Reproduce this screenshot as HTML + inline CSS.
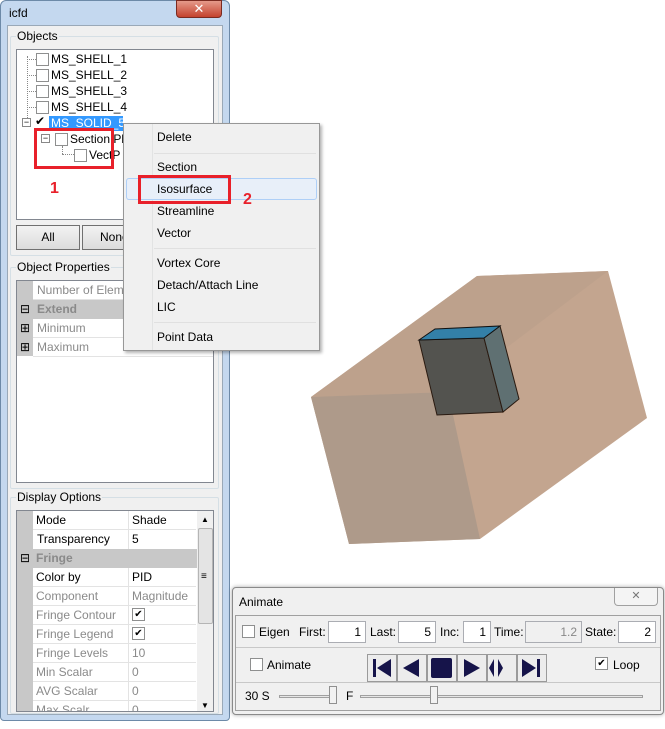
<!DOCTYPE html>
<html><head><meta charset="utf-8"><style>
*{margin:0;padding:0;box-sizing:border-box}
body{width:665px;height:729px;background:#fff;position:relative;overflow:hidden;font-family:"Liberation Sans","DejaVu Sans",sans-serif;font-size:12px;color:#000}
.a{position:absolute}
.t{position:absolute;white-space:nowrap;line-height:14px}
.cb{position:absolute;width:13px;height:13px;border:1px solid #8e8f8f;background:#fff}
.grp{position:absolute;border:1px solid #d5dfe5;border-radius:2px}
.lbl{position:absolute;background:#f0f0f0;padding:0 1px;line-height:14px}
.row{position:absolute;left:33px;height:19px;border-bottom:1px solid #e3e3e3;background:#fff}
.row span{position:absolute;top:2px;line-height:14px;white-space:nowrap}
.g{color:#8a8a8a}
.mi{position:absolute;left:157px;line-height:14px}
.sep{position:absolute;left:154px;width:162px;height:1px;background:#e0e0e0}
.btn{position:absolute;border:1px solid #707070;background:linear-gradient(#f2f2f2,#dcdcdc);text-align:center;line-height:22px}
.pb{position:absolute;top:654px;width:30px;height:28px;border:1px solid #9a9a9a;background:#ececec}
.in{position:absolute;top:621px;height:22px;border:1px solid #abadb3;background:#fff;text-align:right;padding-right:4px;line-height:20px}
</style></head><body>
<!-- 3D scene -->
<svg class="a" style="left:0;top:0" width="665" height="729">
<polygon points="311,397 477,276 608,271 647,418 480,539 349,544" fill="#c3a58f"/>
<polygon points="311,397 477,276 608,271 448,392" fill="#bda18c"/>
<polygon points="311,397 448,392 480,539 349,544" fill="#ae9a8a"/>
<polygon points="419,340 484,338 503,412 437,415" fill="#53534f" stroke="#2a1a10" stroke-width="1"/>
<polygon points="484,338 500,326 519,399 503,412" fill="#5f7072" stroke="#2a1a10" stroke-width="1"/>
<polygon points="419,340 435,329 500,326 484,338" fill="#3380a8" stroke="#111" stroke-width="1"/>
</svg>
<!-- left window -->
<div class="a" style="left:0;top:0;width:230px;height:721px;background:#c4d8ef;border:1px solid #6d8aa8;border-radius:6px 6px 4px 4px"></div>
<div class="t" style="left:9px;top:6px;font-size:12px">icfd</div>
<div class="a" style="left:176px;top:0;width:46px;height:18px;background:linear-gradient(#e59a8a,#c4422e);border:1px solid #7a2a20;border-radius:0 0 4px 4px;color:#fff;text-align:center;font-weight:bold;line-height:16px;font-size:13px">✕</div>
<div class="a" style="left:7px;top:25px;width:216px;height:690px;background:#f0f0f0;border:1px solid #9aa9b8"></div>
<!-- objects -->
<div class="grp" style="left:10px;top:36px;width:209px;height:220px"></div>
<div class="lbl" style="left:16px;top:29px">Objects</div>
<div class="a" style="left:16px;top:49px;width:198px;height:171px;background:#fff;border:1px solid #828790"></div>
<div class="a" style="left:27px;top:56px;height:64px;border-left:1px dotted #888"></div>
<div class="a" style="left:27px;top:59px;width:9px;border-top:1px dotted #888"></div>
<div class="a" style="left:27px;top:75px;width:9px;border-top:1px dotted #888"></div>
<div class="a" style="left:27px;top:91px;width:9px;border-top:1px dotted #888"></div>
<div class="a" style="left:27px;top:107px;width:9px;border-top:1px dotted #888"></div>
<div class="cb" style="left:36px;top:53px"></div><div class="t" style="left:51px;top:52px">MS_SHELL_1</div>
<div class="cb" style="left:36px;top:69px"></div><div class="t" style="left:51px;top:68px">MS_SHELL_2</div>
<div class="cb" style="left:36px;top:85px"></div><div class="t" style="left:51px;top:84px">MS_SHELL_3</div>
<div class="cb" style="left:36px;top:101px"></div><div class="t" style="left:51px;top:100px">MS_SHELL_4</div>
<div class="a" style="left:22px;top:118px;width:9px;height:9px;border:1px solid #888;background:#fff;font-size:9px;line-height:6px;text-align:center">−</div>
<div class="t" style="left:35px;top:114px;font-weight:bold">✔</div>
<div class="a" style="left:49px;top:116px;width:74px;height:15px;background:#3399ff"></div>
<div class="t" style="left:51px;top:116px;color:#fff">MS_SOLID_5</div>
<div class="a" style="left:41px;top:134px;width:9px;height:9px;border:1px solid #888;background:#fff;font-size:9px;line-height:6px;text-align:center">−</div>
<div class="cb" style="left:55px;top:133px"></div><div class="t" style="left:70px;top:132px">Section Pl</div>
<div class="a" style="left:62px;top:146px;height:8px;border-left:1px dotted #888"></div>
<div class="a" style="left:62px;top:154px;width:12px;border-top:1px dotted #888"></div>
<div class="cb" style="left:74px;top:149px"></div><div class="t" style="left:89px;top:148px">VectP</div>
<div class="a" style="left:34px;top:128px;width:80px;height:41px;border:3px solid #e8202a"></div>
<div class="t" style="left:50px;top:180px;color:#e8202a;font-weight:bold;font-size:16px;line-height:18px">1</div>
<div class="btn" style="left:16px;top:225px;width:64px;height:25px">All</div>
<div class="btn" style="left:82px;top:225px;width:60px;height:25px;text-align:left;padding-left:17px">None</div>
<!-- object properties -->
<div class="grp" style="left:10px;top:267px;width:209px;height:222px"></div>
<div class="lbl" style="left:16px;top:260px">Object Properties</div>
<div class="a" style="left:16px;top:280px;width:198px;height:203px;background:#fff;border:1px solid #828790"></div>
<div class="a" style="left:17px;top:281px;width:16px;height:75px;background:#c8c8c8"></div>
<div class="row" style="top:281px;width:180px"><span class="g" style="left:4px">Number of Elements</span></div>
<div class="a" style="left:17px;top:300px;width:196px;height:19px;background:#c8c8c8"></div>
<div class="t" style="left:20px;top:302px">⊟</div>
<div class="t g" style="left:37px;top:302px;font-weight:bold">Extend</div>
<div class="row" style="top:319px;width:180px"><span class="g" style="left:4px">Minimum</span></div>
<div class="row" style="top:338px;width:180px"><span class="g" style="left:4px">Maximum</span></div>
<div class="t" style="left:20px;top:321px">⊞</div>
<div class="t" style="left:20px;top:340px">⊞</div>
<!-- display options -->
<div class="grp" style="left:10px;top:497px;width:209px;height:217px"></div>
<div class="lbl" style="left:16px;top:490px">Display Options</div>
<div class="a" style="left:16px;top:510px;width:198px;height:202px;background:#fff;border:1px solid #828790;overflow:hidden">
 <div class="a" style="left:0;top:0;width:16px;height:202px;background:#c8c8c8"></div>
 <div class="a" style="left:0;top:38px;width:180px;height:19px;background:#c8c8c8"></div>
 <div class="a" style="left:111px;top:0;width:1px;height:38px;background:#e3e3e3"></div>
 <div class="a" style="left:111px;top:57px;width:1px;height:150px;background:#e3e3e3"></div>
 <div class="a" style="left:180px;top:0;width:17px;height:202px;background:#f0f0f0"></div>
 <div class="a" style="left:181px;top:17px;width:15px;height:96px;background:#e4e4e4;border:1px solid #b5b5b5;border-radius:2px"></div>
 <div class="t" style="left:184px;top:2px;font-size:8px">▲</div>
 <div class="t" style="left:184px;top:59px;font-size:10px">≡</div>
 <div class="t" style="left:184px;top:188px;font-size:8px">▼</div>
</div>
<div id="dt"></div>
<div class="t" style="left:36px;top:513px">Mode</div><div class="t" style="left:132px;top:513px">Shade</div>
<div class="t" style="left:37px;top:532px">Transparency</div><div class="t" style="left:132px;top:532px">5</div>
<div class="t" style="left:20px;top:551px">⊟</div><div class="t g" style="left:36px;top:551px;font-weight:bold">Fringe</div>
<div class="t" style="left:36px;top:570px">Color by</div><div class="t" style="left:132px;top:570px">PID</div>
<div class="t g" style="left:36px;top:589px">Component</div><div class="t g" style="left:132px;top:589px">Magnitude</div>
<div class="t g" style="left:36px;top:608px">Fringe Contour</div><div class="cb" style="left:132px;top:608px;font-size:10px;line-height:11px;text-align:center">✔</div>
<div class="t g" style="left:36px;top:627px">Fringe Legend</div><div class="cb" style="left:132px;top:627px;font-size:10px;line-height:11px;text-align:center">✔</div>
<div class="t g" style="left:36px;top:646px">Fringe Levels</div><div class="t g" style="left:132px;top:646px">10</div>
<div class="t g" style="left:36px;top:665px">Min Scalar</div><div class="t g" style="left:132px;top:665px">0</div>
<div class="t g" style="left:36px;top:684px">AVG Scalar</div><div class="t g" style="left:132px;top:684px">0</div>
<div class="a" style="left:33px;top:701px;width:163px;height:10px;overflow:hidden"><div class="t g" style="left:3px;top:2px">Max Scalr</div><div class="t g" style="left:99px;top:2px">0</div></div>
<div class="a" style="left:33px;top:529px;width:163px;border-top:1px solid #e3e3e3"></div>
<div class="a" style="left:33px;top:586px;width:163px;border-top:1px solid #e3e3e3"></div>
<div class="a" style="left:33px;top:605px;width:163px;border-top:1px solid #e3e3e3"></div>
<div class="a" style="left:33px;top:624px;width:163px;border-top:1px solid #e3e3e3"></div>
<div class="a" style="left:33px;top:643px;width:163px;border-top:1px solid #e3e3e3"></div>
<div class="a" style="left:33px;top:662px;width:163px;border-top:1px solid #e3e3e3"></div>
<div class="a" style="left:33px;top:681px;width:163px;border-top:1px solid #e3e3e3"></div>
<div class="a" style="left:33px;top:700px;width:163px;border-top:1px solid #e3e3e3"></div>
<!-- context menu -->
<div class="a" style="left:123px;top:123px;width:197px;height:228px;background:#f0f0f0;border:1px solid #979797;box-shadow:2px 2px 3px rgba(0,0,0,.3)"></div>
<div class="a" style="left:152px;top:124px;width:1px;height:226px;background:#e2e3e3"></div>
<div class="mi" style="top:130px">Delete</div>
<div class="sep" style="top:153px"></div>
<div class="mi" style="top:160px">Section</div>
<div class="a" style="left:126px;top:178px;width:191px;height:22px;background:#e8eff9;border:1px solid #aecff7;border-radius:3px"></div>
<div class="mi" style="top:182px">Isosurface</div>
<div class="mi" style="top:204px">Streamline</div>
<div class="mi" style="top:226px">Vector</div>
<div class="sep" style="top:248px"></div>
<div class="mi" style="top:256px">Vortex Core</div>
<div class="mi" style="top:278px">Detach/Attach Line</div>
<div class="mi" style="top:300px">LIC</div>
<div class="sep" style="top:322px"></div>
<div class="mi" style="top:330px">Point Data</div>
<div class="a" style="left:138px;top:175px;width:93px;height:29px;border:3px solid #e8202a"></div>
<div class="t" style="left:243px;top:191px;color:#e8202a;font-weight:bold;font-size:16px;line-height:18px">2</div>
<!-- animate -->
<div class="a" style="left:232px;top:587px;width:432px;height:128px;background:#f0f0f0;border:1px solid #8a8a8a;border-radius:4px;box-shadow:0 0 4px rgba(0,0,0,.35)"></div>
<div class="t" style="left:239px;top:595px">Animate</div>
<div class="a" style="left:614px;top:588px;width:44px;height:18px;border:1px solid #a0a0a0;border-top:none;border-radius:0 0 4px 4px;background:#f4f4f4;text-align:center;color:#777;line-height:16px;font-size:11px">✕</div>
<div class="a" style="left:235px;top:615px;width:426px;height:96px;border:1px solid #a0a0a0"></div>
<div class="a" style="left:236px;top:647px;width:424px;border-top:1px solid #c8c8c8"></div>
<div class="a" style="left:236px;top:682px;width:424px;border-top:1px solid #c8c8c8"></div>
<div class="cb" style="left:242px;top:625px"></div><div class="t" style="left:259px;top:625px">Eigen</div>
<div class="t" style="left:299px;top:625px">First:</div><div class="in" style="left:328px;top:621px;width:38px">1</div>
<div class="t" style="left:370px;top:625px">Last:</div><div class="in" style="left:398px;top:621px;width:38px">5</div>
<div class="t" style="left:440px;top:625px">Inc:</div><div class="in" style="left:463px;top:621px;width:28px">1</div>
<div class="t" style="left:494px;top:625px">Time:</div><div class="in" style="left:525px;top:621px;width:57px;background:#f0f0f0;color:#888">1.2</div>
<div class="t" style="left:585px;top:625px">State:</div><div class="in" style="left:618px;top:621px;width:38px">2</div>
<div class="cb" style="left:250px;top:658px"></div><div class="t" style="left:267px;top:658px">Animate</div>
<div class="pb" style="left:367px"></div><div class="pb" style="left:397px"></div><div class="pb" style="left:427px"></div>
<div class="pb" style="left:457px"></div><div class="pb" style="left:487px"></div><div class="pb" style="left:517px"></div>
<svg class="a" style="left:367px;top:654px" width="180" height="28" fill="#16144a">
<rect x="6" y="5" width="3" height="18"/><polygon points="10,14 24,5 24,23"/>
<polygon points="36,14 52,5 52,23"/>
<rect x="64" y="4" width="21" height="20" rx="2"/>
<polygon points="97,5 113,14 97,23"/>
<polygon points="122,14 127,5 127,23"/><polygon points="131,5 136,14 131,23"/>
<polygon points="155,5 169,14 155,23"/><rect x="170" y="5" width="3" height="18"/>
</svg>
<div class="cb" style="left:595px;top:657px;font-size:10px;line-height:11px;text-align:center">✔</div><div class="t" style="left:613px;top:658px">Loop</div>
<div class="t" style="left:245px;top:689px">30 S</div>
<div class="a" style="left:279px;top:695px;width:56px;height:3px;border:1px solid #a0a0a0;background:#e6e6e6"></div>
<div class="a" style="left:329px;top:686px;width:8px;height:18px;border:1px solid #909090;background:#f2f2f2"></div>
<div class="t" style="left:346px;top:689px">F</div>
<div class="a" style="left:360px;top:695px;width:283px;height:3px;border:1px solid #a0a0a0;background:#e6e6e6"></div>
<div class="a" style="left:430px;top:686px;width:8px;height:18px;border:1px solid #909090;background:#f2f2f2"></div>
</body></html>
